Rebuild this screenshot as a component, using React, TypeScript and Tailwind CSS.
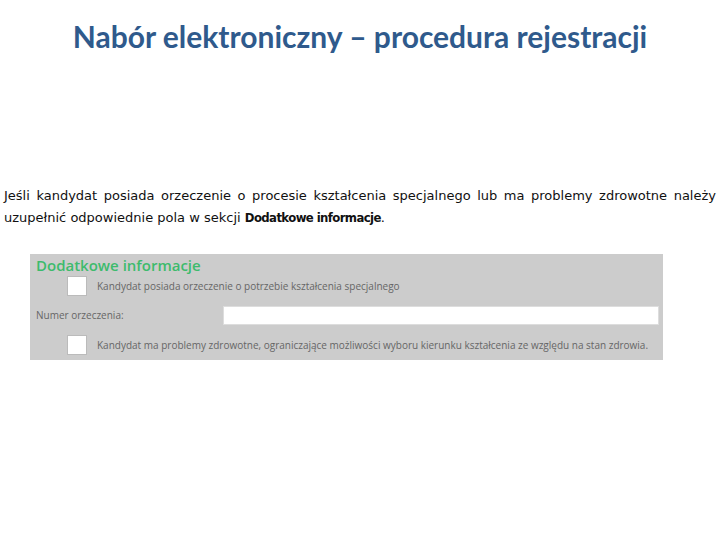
export default function App() {
  return (
    <div className="flex h-[540px] w-[720px] flex-col bg-white">
      <h1 className="pt-[17px] text-center font-['Lato','Noto_Sans',sans-serif] text-[30px] font-bold leading-[38px] text-[#2f5a8c]">
        Nabór elektroniczny – procedura rejestracji
      </h1>

      <p className="mt-[130px] px-[4px] text-justify font-['DejaVu_Sans',sans-serif] text-[13px] leading-[22px] text-[#111]">
        Jeśli kandydat posiada orzeczenie o procesie kształcenia specjalnego lub ma problemy zdrowotne należy
        uzupełnić odpowiednie pola w sekcji{" "}
        <b className="font-['DejaVu_Sans_Condensed','DejaVu_Sans',sans-serif] tracking-[-0.6px]">Dodatkowe informacje</b>.
      </p>

      <div className="ml-[30px] mt-[25px] flex h-[106px] w-[633px] flex-col bg-[#cccccc] font-['Open_Sans',sans-serif]">
        <div className="pl-[6px] pt-[1px] text-[15px] font-semibold leading-[20px] text-[#3dbb6c]">Dodatkowe informacje</div>
        <div className="mt-[1px] flex items-center pl-[37px]">
          <span className="h-[20px] w-[20px] border border-[#bbb] bg-white" />
          <span className="ml-[10px] text-[10px] text-[#666]">
            Kandydat posiada orzeczenie o potrzebie kształcenia specjalnego
          </span>
        </div>
        <div className="mt-[10px] flex items-center pl-[6px]">
          <span className="w-[187px] text-[10px] text-[#666]">Numer orzeczenia:</span>
          <span className="h-[19px] w-[436px] border border-[#ddd] bg-white" />
        </div>
        <div className="mt-[10px] flex items-center pl-[37px]">
          <span className="h-[20px] w-[20px] border border-[#bbb] bg-white" />
          <span className="ml-[10px] text-[10px] text-[#666]">
            Kandydat ma problemy zdrowotne, ograniczające możliwości wyboru kierunku kształcenia ze względu na stan zdrowia.
          </span>
        </div>
      </div>
    </div>
  );
}
